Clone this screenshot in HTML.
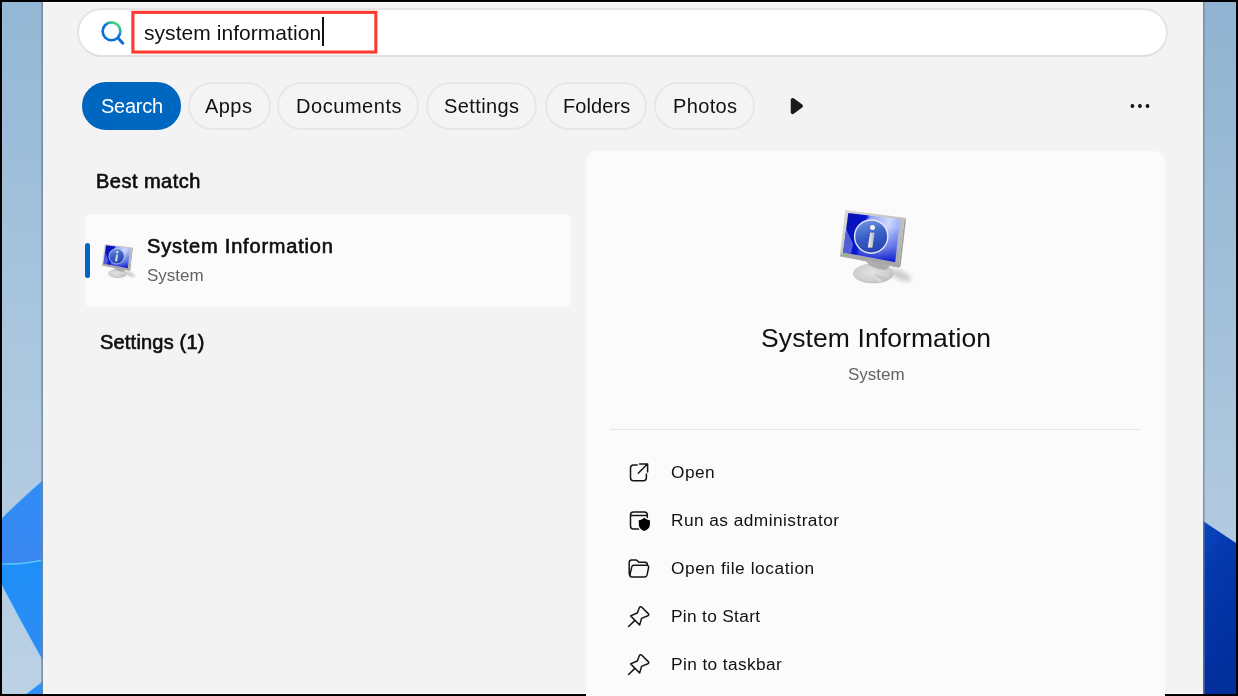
<!DOCTYPE html>
<html lang="en">
<head>
<meta charset="utf-8">
<title>Search - system information</title>
<style>
html,body{margin:0;padding:0;}
body{width:1238px;height:696px;overflow:hidden;background:#000;position:relative;font-family:"Liberation Sans",sans-serif;color:#111;}
.abs{position:absolute;}
#wall-l{left:2px;top:2px;width:41px;height:692px;}
#wall-r{left:1203px;top:2px;width:33px;height:692px;}
#panel{left:43px;top:2px;width:1160px;height:692px;background:#f3f3f3;box-shadow:inset 0 1px 0 #fdfdfd, inset 0 -1px 0 #fdfdfd;}
#edge-l{left:41px;top:2px;width:2px;height:692px;background:linear-gradient(90deg,rgba(120,140,160,.55),rgba(110,128,146,.85));}
#edge-r{left:1203px;top:2px;width:2px;height:692px;background:linear-gradient(90deg,rgba(110,128,146,.85),rgba(120,140,160,.3));}
#sbox{left:77px;top:8px;width:1091px;height:49px;box-sizing:border-box;border:2px solid #e4e4e4;border-bottom-color:#e0e0e0;border-radius:25px;background:#fff;}
.t{position:absolute;white-space:nowrap;line-height:1;}
.t,.ct,.act{will-change:transform;}
#q{left:143.5px;top:22px;font-size:21px;letter-spacing:0.05px;}
#caret{left:322px;top:17px;width:1.5px;height:29px;background:#111;}
.chip{position:absolute;top:82px;height:48px;box-sizing:border-box;border:2px solid #e7e7e7;border-radius:24px;background:#f4f4f4;}
.chip.sel{background:#0067c0;border-color:#0067c0;}
.ct{position:absolute;top:96px;font-size:20px;line-height:1;white-space:nowrap;}
.hdr{font-size:20px;color:#0e0e0e;-webkit-text-stroke:0.62px #0e0e0e;letter-spacing:0.7px;}
#item{left:85px;top:214px;width:486px;height:93px;background:#fbfbfb;border-radius:5px;}
#bar{left:85px;top:243px;width:4.5px;height:35px;border-radius:3px;background:#0067c0;}
#rp{left:586px;top:150.5px;width:579px;height:560px;background:#fbfbfb;border-radius:11px;}
#div{left:610px;top:429px;width:531px;height:1px;background:#e5e5e5;}
.act{position:absolute;left:671px;font-size:17.3px;line-height:1;white-space:nowrap;}
.gray{color:#636363;}
svg{position:absolute;overflow:visible;}
</style>
</head>
<body>
<!-- wallpaper strips -->
<svg id="wall-l" class="abs" width="41" height="692" viewBox="2 2 41 692">
  <defs>
    <linearGradient id="gl" x1="0" y1="0" x2="0" y2="1"><stop offset="0" stop-color="#93b7d5"/><stop offset="0.5" stop-color="#aac7df"/><stop offset="1" stop-color="#bcd1e4"/></linearGradient>
    <linearGradient id="gb1" x1="0" y1="0" x2="0" y2="1"><stop offset="0" stop-color="#2f8df6"/><stop offset="1" stop-color="#3a86f0"/></linearGradient>
    <linearGradient id="gb2" x1="0" y1="0" x2="0" y2="1"><stop offset="0" stop-color="#1e8ff8"/><stop offset="1" stop-color="#2f8bf2"/></linearGradient>
  </defs>
  <rect x="2" y="2" width="41" height="692" fill="url(#gl)"/>
  <path d="M2 518 C14 506 28 493 43 480 L43 560 C30 563 14 564.5 2 564 Z" fill="url(#gb1)"/>
  <path d="M2 518 C14 506 28 493 43 480" stroke="#7cc0fb" stroke-width="1" fill="none" opacity="0.8"/>
  <path d="M2 564 C14 564.5 30 563 43 560 L43 661 C29 637 15 610 2 586 Z" fill="url(#gb2)"/>
  <path d="M2 586 C15 610 29 637 43 661" stroke="#8fd0fd" stroke-width="1" fill="none" opacity="0.8"/>
  <path d="M2 564 C14 564.5 30 563 43 560" stroke="#58c4fd" stroke-width="1.5" fill="none"/>
  <path d="M26 694 L43 681 L43 694 Z" fill="#2b90f6"/>
  <path d="M26 694 L43 681" stroke="#8fd0fd" stroke-width="1" fill="none" opacity="0.8"/>
</svg>
<svg id="wall-r" class="abs" width="33" height="692" viewBox="1203 2 33 692">
  <defs>
    <linearGradient id="gr" x1="0" y1="0" x2="0" y2="1"><stop offset="0" stop-color="#8fb3d1"/><stop offset="0.75" stop-color="#b0c9df"/><stop offset="1" stop-color="#b6cde2"/></linearGradient>
    <linearGradient id="gd" x1="0" y1="0" x2="0.25" y2="1"><stop offset="0" stop-color="#0a47c2"/><stop offset="0.3" stop-color="#0439ae"/><stop offset="1" stop-color="#022e9c"/></linearGradient>
  </defs>
  <rect x="1203" y="2" width="33" height="692" fill="url(#gr)"/>
  <path d="M1203 521 L1236 543 L1236 694 L1203 694 Z" fill="url(#gd)"/>
</svg>
<div id="edge-l" class="abs"></div>
<div id="panel" class="abs"></div>
<div id="edge-r" class="abs"></div>

<!-- search box -->
<div id="sbox" class="abs"></div>
<svg class="abs" style="left:98px;top:18px" width="30" height="30" viewBox="98 18 30 30">
  <defs><linearGradient id="gs" x1="0.2" y1="1" x2="0.9" y2="0"><stop offset="0" stop-color="#0a6cd5"/><stop offset="0.55" stop-color="#0d72d5"/><stop offset="0.8" stop-color="#3cc48c"/><stop offset="1" stop-color="#62e26a"/></linearGradient></defs>
  <circle cx="111.5" cy="31.3" r="8.9" fill="#f9fbfe" stroke="url(#gs)" stroke-width="2.6"/>
  <path d="M118 38 L122.8 43.3" stroke="#0a6cd5" stroke-width="2.9" stroke-linecap="round"/>
</svg>
<svg class="abs" style="left:0;top:0" width="400" height="60" viewBox="0 0 400 60"><rect x="132.9" y="12.35" width="242.95" height="39.7" fill="none" stroke="#fd3a30" stroke-width="3.1"/></svg>
<div id="q" class="t">system information</div>
<div id="caret" class="abs"></div>

<!-- chips -->
<div class="chip sel" style="left:82px;width:99px"></div>
<div class="chip" style="left:188px;width:83px"></div>
<div class="chip" style="left:277px;width:142px"></div>
<div class="chip" style="left:426px;width:111px"></div>
<div class="chip" style="left:545px;width:102px"></div>
<div class="chip" style="left:654px;width:101px"></div>
<div class="ct" style="left:100.5px;color:#fff;letter-spacing:-0.25px">Search</div>
<div class="ct" style="left:205px;letter-spacing:0.45px">Apps</div>
<div class="ct" style="left:295.5px;letter-spacing:0.55px">Documents</div>
<div class="ct" style="left:444px;letter-spacing:0.4px">Settings</div>
<div class="ct" style="left:562.5px;letter-spacing:0.1px">Folders</div>
<div class="ct" style="left:673px;letter-spacing:0.35px">Photos</div>
<svg class="abs" style="left:788px;top:96px" width="18" height="20" viewBox="788 96 18 20">
  <path d="M792.6 99.8 L801.1 106 L792.6 112.2 Z" fill="#1a1a1a" stroke="#1a1a1a" stroke-width="3.7" stroke-linejoin="round"/>
</svg>
<svg class="abs" style="left:1128px;top:100px" width="24" height="12" viewBox="1128 100 24 12">
  <circle cx="1132.4" cy="106" r="1.9" fill="#111"/><circle cx="1139.9" cy="106" r="1.9" fill="#111"/><circle cx="1147.5" cy="106" r="1.9" fill="#111"/>
</svg>

<!-- left results -->
<div class="t hdr" style="left:96px;top:171px;letter-spacing:0.48px">Best match</div>
<div id="item" class="abs"></div>
<div id="bar" class="abs"></div>
<div class="t hdr" style="left:147px;top:236px;letter-spacing:0.8px">System Information</div>
<div class="t gray" style="left:147px;top:266.6px;font-size:17px">System</div>
<div class="t hdr" style="left:100px;top:332px;letter-spacing:0.2px">Settings (1)</div>

<!-- right pane -->
<div id="rp" class="abs"></div>
<div class="t" style="left:761px;top:325.4px;font-size:26.5px;letter-spacing:0.1px">System Information</div>
<div class="t gray" style="left:848px;top:365.5px;font-size:17px">System</div>
<div id="div" class="abs"></div>

<!-- monitor icon definition -->
<svg class="abs" style="left:0;top:0" width="0" height="0">
  <defs>
    <linearGradient id="mfr" x1="0" y1="0" x2="1" y2="1"><stop offset="0" stop-color="#dcdcdc"/><stop offset="0.5" stop-color="#c4c4c4"/><stop offset="1" stop-color="#a9a7a7"/></linearGradient>
    <linearGradient id="mscr" x1="0" y1="0" x2="1" y2="0.25"><stop offset="0" stop-color="#0a10a0"/><stop offset="0.40" stop-color="#0414d4"/><stop offset="0.47" stop-color="#8aa0f8"/><stop offset="0.8" stop-color="#d6deff"/><stop offset="1" stop-color="#a0b4fb"/></linearGradient>
    <linearGradient id="mscr2" x1="0" y1="0" x2="0" y2="1"><stop offset="0" stop-color="#0a1ed0" stop-opacity="0"/><stop offset="0.3" stop-color="#0a1ed0" stop-opacity="0.05"/><stop offset="0.7" stop-color="#0a1ed0" stop-opacity="0.45"/><stop offset="1" stop-color="#0616c4" stop-opacity="0.97"/></linearGradient>
    <linearGradient id="mcir" x1="0.3" y1="0" x2="0.6" y2="1"><stop offset="0" stop-color="#6f93e4"/><stop offset="0.45" stop-color="#3b62c8"/><stop offset="1" stop-color="#2440b4"/></linearGradient>
    <linearGradient id="mi" x1="0" y1="0" x2="1" y2="0"><stop offset="0" stop-color="#f4f4f4"/><stop offset="0.6" stop-color="#d0d0d0"/><stop offset="1" stop-color="#a8a8a8"/></linearGradient>
    <radialGradient id="mst" cx="0.45" cy="0.45" r="0.6"><stop offset="0" stop-color="#e2e2e2"/><stop offset="0.7" stop-color="#cfcfcf"/><stop offset="1" stop-color="#bdbdbd"/></radialGradient>
    <filter id="mblur" x="-50%" y="-50%" width="200%" height="200%"><feGaussianBlur stdDeviation="2.2"/></filter>
    <g id="monitor">
      <ellipse cx="900" cy="275" rx="12" ry="4.5" fill="#8a8a8a" opacity="0.4" filter="url(#mblur)" transform="rotate(24 900 275)"/>
      <ellipse cx="873.3" cy="273.4" rx="20.3" ry="9.9" fill="url(#mst)"/>
      <path d="M873.3 273.4 L884 281.5 L889 278.5 Z" fill="#c2c2c2" opacity="0.8"/>
      <path d="M873.3 273.4 L879 282.8 L883 282 Z" fill="#dadada" opacity="0.8"/>
      <path d="M866 261 C868 266 876 269 886 270 L890 266 L868 259 Z" fill="#a6a6a6" opacity="0.85"/>
      <path d="M904.6 217.7 L906 219 L900.6 266 L898.8 267.6 Z" fill="#9c9c9c"/>
      <path d="M845.3 210.1 L904.6 217.7 L898.8 267.6 L839.8 256.2 Z" fill="url(#mfr)"/>
      <path d="M839.8 256.2 L898.8 267.6 L899.4 262.3 L843.1 252.3 Z" fill="#a9a7a7"/>
      <path d="M848.3 213 L900 219.2 L895.2 262.3 L843.1 252.3 Z" fill="url(#mscr)"/>
      <path d="M848.3 213 L900 219.2 L895.2 262.3 L843.1 252.3 Z" fill="url(#mscr2)"/>
      <path d="M846.3 229 L853 244 L851 253.8 L843.1 252.3 Z" fill="#8f9be8" opacity="0.55"/>
      <circle cx="871.2" cy="236.6" r="16.6" fill="url(#mcir)" stroke="#e6e7ee" stroke-width="1.4"/>
      <circle cx="872.5" cy="227.4" r="2.5" fill="#f2f2f2"/>
      <path d="M870.2 232.4 L874.6 232.8 L872.4 247.8 L867.8 247.4 Z" fill="url(#mi)"/>
      <circle cx="846.4" cy="255.4" r="0.8" fill="#5fd04a"/>
    </g>
  </defs>
</svg>
<svg class="abs" style="left:0;top:0" width="1238" height="696" viewBox="0 0 1238 696">
  <use href="#monitor"/>
  <use href="#monitor" transform="translate(104.6 244) scale(0.465) translate(-845.3 -210.1)"/>
</svg>

<!-- action icons -->
<svg class="abs" style="left:0;top:0" width="1238" height="696" viewBox="0 0 1238 696" fill="none" stroke="#141414" stroke-width="1.5" stroke-linecap="round" stroke-linejoin="round">
  <!-- open -->
  <path d="M637.2 465.1 H633.5 a3 3 0 0 0 -3 3 V477.8 a3 3 0 0 0 3 3 H643.4 a3 3 0 0 0 3 -3 V474"/>
  <path d="M638.3 473.2 L647.4 464 M639.6 463.9 H647.6 V472"/>
  <!-- run as admin -->
  <path d="M647.3 517.4 V514.9 a3 3 0 0 0 -3 -3 H633.5 a3 3 0 0 0 -3 3 V525.9 a3 3 0 0 0 3 3 H638.8 M630.5 515.6 H647.3"/>
  <path d="M644.3 517.8 C646 519.4 648 520.1 649.9 520.2 V524.5 C649.9 527.8 647.5 529.9 644.3 531 C641.1 529.9 638.8 527.8 638.8 524.5 V520.2 C640.7 520.1 642.6 519.4 644.3 517.8 Z" fill="#fbfbfb" stroke="#fbfbfb" stroke-width="2.2"/>
  <path d="M644.3 517.8 C646 519.4 648 520.1 649.9 520.2 V524.5 C649.9 527.8 647.5 529.9 644.3 531 C641.1 529.9 638.8 527.8 638.8 524.5 V520.2 C640.7 520.1 642.6 519.4 644.3 517.8 Z" fill="#000" stroke="none"/>
  <!-- folder -->
  <path d="M630.4 575.8 C629.5 575.2 629.2 574.2 629.2 573.2 V562.4 a2.5 2.5 0 0 1 2.5 -2.5 H635.6 c0.8 0 1.4 0.3 1.9 0.9 l1.4 1.5 H645 a2.4 2.4 0 0 1 2.4 2.4 V565.3"/>
  <path d="M633.8 565.3 H646.9 c1.2 0 1.9 0.9 1.7 2 l-1.5 7.6 c-0.3 1.3 -1.2 2 -2.4 2 H631.6 c-1.2 0 -1.9 -1 -1.6 -2.2 l1.7 -7.6 c0.3 -1.2 1 -1.8 2.1 -1.8 Z"/>
  <!-- pin x2 -->
  <g id="pin">
    <path d="M639.4 607.6 Q640.6 606 641.9 607.3 L648.2 613.6 Q649.5 614.9 647.8 615.7 L641.6 618.4 L639.6 625 L630.6 615.9 L637.3 613 Z"/>
    <path d="M634.6 620.6 L628.6 626.5"/>
  </g>
  <use href="#pin" transform="translate(0 48)"/>
</svg>


<div class="act" style="top:464px;letter-spacing:0.45px">Open</div>
<div class="act" style="top:512px;letter-spacing:0.45px">Run as administrator</div>
<div class="act" style="top:560px;letter-spacing:0.57px">Open file location</div>
<div class="act" style="top:608px;letter-spacing:0.32px">Pin to Start</div>
<div class="act" style="top:656px;letter-spacing:0.4px">Pin to taskbar</div>

<div class="abs" style="left:43px;top:693px;width:1160px;height:1px;background:#fefefe"></div>
</body>
</html>
